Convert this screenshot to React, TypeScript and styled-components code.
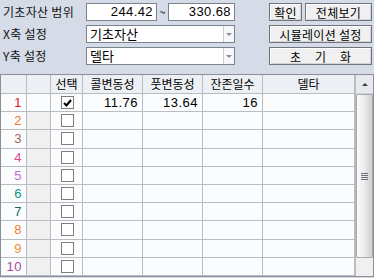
import React from 'react'
import styled, { createGlobalStyle } from 'styled-components'

const GlobalStyle = createGlobalStyle`
  html, body {
    margin: 0;
    padding: 0;
    background: #d5dce8;
  }
  body {
    font-family: "Noto Sans CJK KR", "DejaVu Sans", sans-serif;
    font-size: 12px;
    color: #000;
  }
`

type RowData = {
  color: string
  checked: boolean
  call?: string
  put?: string
  days?: string
  delta?: string
}

const rows: RowData[] = [
  { color: '#e8141c', checked: true, call: '11.76', put: '13.64', days: '16' },
  { color: '#f07a22', checked: false },
  { color: '#a8645c', checked: false },
  { color: '#e0448e', checked: false },
  { color: '#c46ad6', checked: false },
  { color: '#10967e', checked: false },
  { color: '#0c6a62', checked: false },
  { color: '#f4802c', checked: false },
  { color: '#f28c26', checked: false },
  { color: '#a8489a', checked: false },
]

const Page = styled.div`
  width: 374px;
  height: 278px;
  overflow: hidden;
  background: #d5dce8;
`

const Controls = styled.div`
  display: grid;
  grid-template-columns: 83px 149px 34px 103px;
  grid-auto-rows: 18px;
  row-gap: 4px;
  padding: 3px 0 0 3px;
  align-items: center;
`

const Label = styled.div`
  line-height: 18px;
  white-space: nowrap;
  letter-spacing: 0.3px;
  color: #111;
`

const RangeBox = styled.div`
  display: flex;
  align-items: center;
  height: 18px;
`

const Tilde = styled.span`
  width: 11px;
  text-align: center;
  font-size: 10px;
  line-height: 18px;
`

const Field = styled.div<{ $w?: number; $align?: 'left' | 'right' }>`
  box-sizing: border-box;
  width: ${(p) => (p.$w ? `${p.$w}px` : '100%')};
  height: 18px;
  background: #fff;
  border: 1px solid #7b828c;
  line-height: 16px;
  padding: 0 3px;
  text-align: ${(p) => p.$align ?? 'left'};
  font-family: "Liberation Sans", "Noto Sans CJK KR", sans-serif;
  font-size: 13px;
  letter-spacing: 0.4px;
  white-space: nowrap;
  overflow: hidden;
`

const Select = styled.div`
  box-sizing: border-box;
  width: 149px;
  height: 18px;
  display: flex;
  background: #fff;
  border: 1px solid #7b828c;
`

const SelectText = styled.div`
  flex: 1;
  line-height: 16px;
  padding: 0 3px;
  font-size: 13px;
`

const SelectArrow = styled.div`
  width: 10px;
  border-left: 1px solid #c9ced6;
  background: #f7f8fa;
  display: flex;
  align-items: center;
  justify-content: center;

  &::after {
    content: '';
    border-left: 3px solid transparent;
    border-right: 3px solid transparent;
    border-top: 3px solid #8a8f96;
  }
`

const ButtonGroup = styled.div`
  grid-column: 4;
  display: flex;
  gap: 3px;
  height: 18px;
`

const Button = styled.button<{ $w?: number; $spread?: boolean }>`
  box-sizing: border-box;
  width: ${(p) => (p.$w ? `${p.$w}px` : '100%')};
  height: 18px;
  margin: 0;
  padding: 0;
  background: #f0f0f0;
  border: 1px solid #6f747c;
  box-shadow: inset 1px 1px 0 #ffffff, inset -1px -1px 0 #d2d4d8;
  font-family: "Noto Sans CJK KR", sans-serif;
  font-size: 12px;
  line-height: 15px;
  color: #000;
  letter-spacing: ${(p) => (p.$spread ? '14px' : '0.3px')};
  text-indent: ${(p) => (p.$spread ? '14px' : '0')};
  white-space: nowrap;
`

const Table = styled.div`
  margin-top: 9px;
  box-sizing: border-box;
  width: 374px;
  height: 203px;
  display: flex;
  border: 1px solid #8c9096;
  background: #fbfcfe;
`

const GridBody = styled.div`
  flex: 1;
  display: grid;
  grid-template-columns: 26px 24px 32px 60px 60px 60px 1fr;
  grid-template-rows: 19px repeat(10, 1fr);
`

const HeadCell = styled.div`
  box-sizing: border-box;
  background: #eceff3;
  border-right: 1px solid #b9bcc1;
  border-bottom: 1px solid #b9bcc1;
  text-align: center;
  line-height: 18px;
  font-size: 12px;
  white-space: nowrap;
`

const Cell = styled.div<{ $align?: 'left' | 'right' | 'center'; $shade?: boolean; $color?: string }>`
  box-sizing: border-box;
  border-right: 1px solid #b9bcc1;
  border-bottom: 1px solid #b9bcc1;
  background: ${(p) => (p.$shade ? '#f0f0f0' : '#fbfcfe')};
  display: flex;
  align-items: center;
  justify-content: ${(p) =>
    p.$align === 'right' ? 'flex-end' : p.$align === 'center' ? 'center' : 'flex-start'};
  padding: 0 3px;
  color: ${(p) => p.$color ?? '#000'};
  font-family: "Liberation Sans", "Noto Sans CJK KR", sans-serif;
  font-size: 13px;
`

const NumCell = styled(Cell)`
  padding-right: 4px;
  letter-spacing: 0.5px;
`

const Check = styled.div<{ $on: boolean }>`
  box-sizing: border-box;
  width: 13px;
  height: 13px;
  border: 1px solid #7f7f7f;
  background: #fff;
  display: flex;
  align-items: center;
  justify-content: center;
  margin-left: 1px;
`

const Scrollbar = styled.div`
  width: 17px;
  display: flex;
  flex-direction: column;
  border-left: 1px solid #b9bcc1;
  background: #f0f0f0;
`

const ScrollUp = styled.div`
  height: 18px;
  background: #e6e9ee;
  border-bottom: 1px solid #d0d3d8;
  display: flex;
  justify-content: center;
  align-items: center;

  &::after {
    content: '';
    border-left: 3px solid transparent;
    border-right: 3px solid transparent;
    border-bottom: 3px solid #3c3c3c;
  }
`

const Thumb = styled.div`
  box-sizing: border-box;
  height: 164px;
  border: 1px solid #a4a8ae;
  border-radius: 1px;
  background: linear-gradient(to right, #fbfbfb 0%, #eeeeee 45%, #cdcfd2 100%);
  display: flex;
  align-items: center;
  justify-content: center;
`

const Grip = styled.div`
  width: 7px;
  height: 7px;
  background: repeating-linear-gradient(
    to bottom,
    #6d6f73 0px,
    #6d6f73 1px,
    transparent 1px,
    transparent 2px
  );
`

const CheckMark = () => (
  <svg width="9" height="8" viewBox="0 0 9 8">
    <path d="M1 4 L3.5 6.5 L8 1" fill="none" stroke="#000" strokeWidth="2" />
  </svg>
)

export default function App() {
  return (
    <Page>
      <GlobalStyle />
      <Controls>
        <Label>기초자산 범위</Label>
        <RangeBox>
          <Field $w={71} $align="right">244.42</Field>
          <Tilde>~</Tilde>
          <Field $w={67} $align="right">330.68</Field>
        </RangeBox>
        <ButtonGroup>
          <Button $w={33}>확인</Button>
          <Button $w={67}>전체보기</Button>
        </ButtonGroup>

        <Label>X축 설정</Label>
        <Select>
          <SelectText>기초자산</SelectText>
          <SelectArrow />
        </Select>
        <ButtonGroup>
          <Button>시뮬레이션 설정</Button>
        </ButtonGroup>

        <Label>Y축 설정</Label>
        <Select>
          <SelectText>델타</SelectText>
          <SelectArrow />
        </Select>
        <ButtonGroup>
          <Button $spread>초기화</Button>
        </ButtonGroup>
      </Controls>

      <Table>
        <GridBody>
          <HeadCell />
          <HeadCell />
          <HeadCell>선택</HeadCell>
          <HeadCell>콜변동성</HeadCell>
          <HeadCell>풋변동성</HeadCell>
          <HeadCell>잔존일수</HeadCell>
          <HeadCell>델타</HeadCell>
          {rows.map((r, i) => (
            <React.Fragment key={i}>
              <NumCell $align="right" $color={r.color}>{i + 1}</NumCell>
              <Cell $shade={i > 0} />
              <Cell $align="center">
                <Check $on={r.checked}>{r.checked && <CheckMark />}</Check>
              </Cell>
              <NumCell $align="right">{r.call}</NumCell>
              <NumCell $align="right">{r.put}</NumCell>
              <NumCell $align="right">{r.days}</NumCell>
              <Cell>{r.delta}</Cell>
            </React.Fragment>
          ))}
        </GridBody>
        <Scrollbar>
          <ScrollUp />
          <Thumb>
            <Grip />
          </Thumb>
        </Scrollbar>
      </Table>
    </Page>
  )
}
